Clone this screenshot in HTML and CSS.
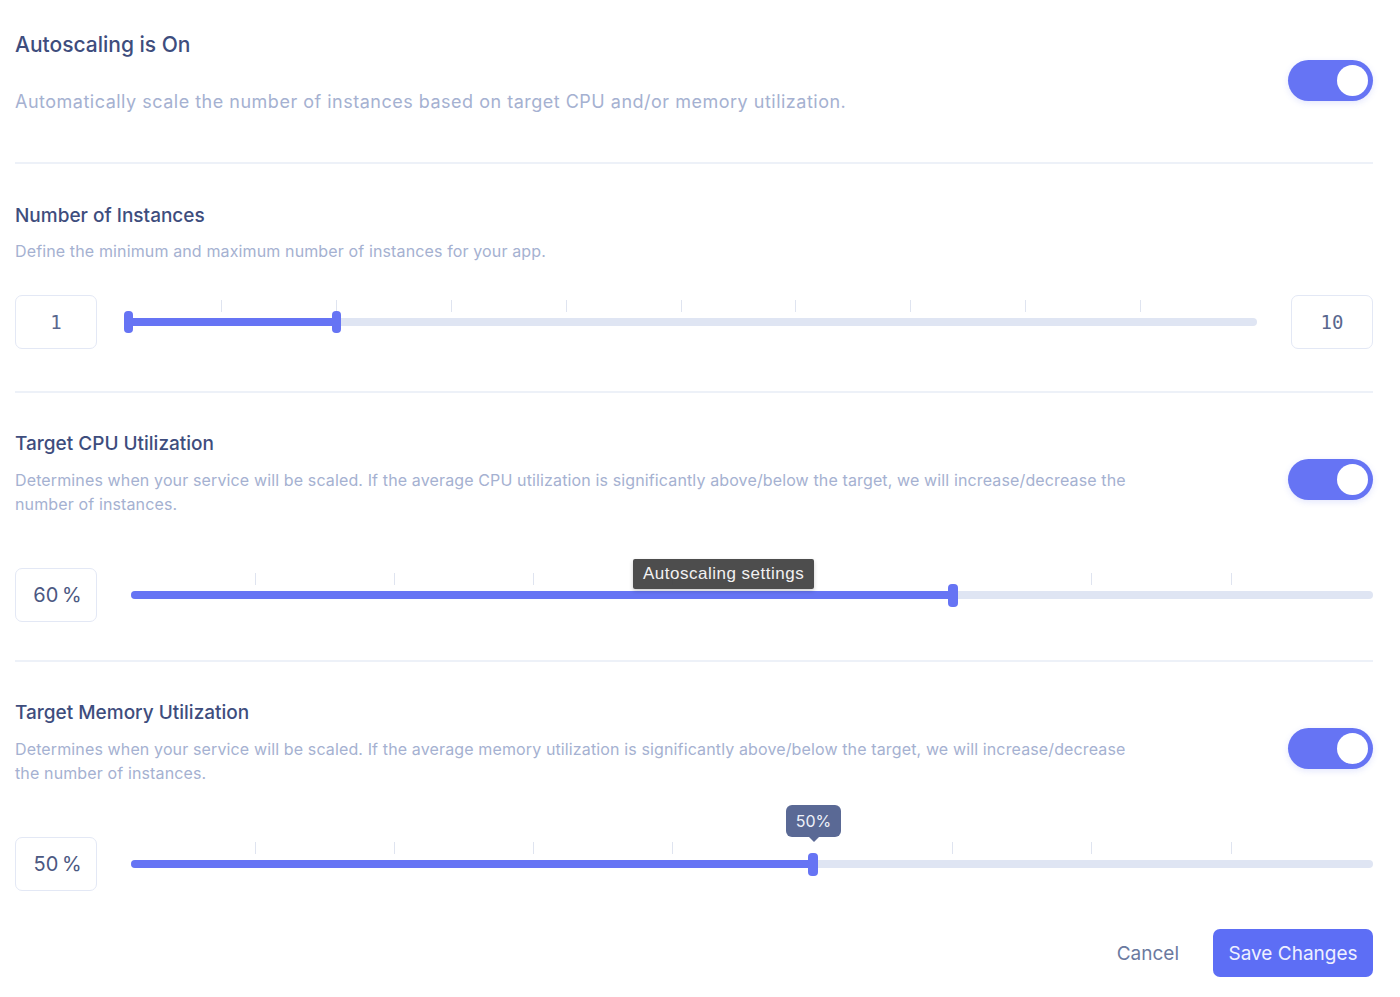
FILE: index.html
```html
<!DOCTYPE html>
<html>
<head>
<meta charset="utf-8">
<link rel="stylesheet" href="styles.css">
</head>
<body>
<div class="page">
  <section class="sec sec-first">
    <div class="head">
      <div class="text">
        <h2 class="title title-lg">Autoscaling is On</h2>
        <p class="desc desc-lg">Automatically scale the number of instances based on target CPU and/or memory utilization.</p>
      </div>
      <div class="toggle"><span class="knob"></span></div>
    </div>
  </section>

  <section class="sec sec-inst">
    <div class="head">
      <div class="text">
        <h2 class="title">Number of Instances</h2>
        <p class="desc desc-inst">Define the minimum and maximum number of instances for your app.</p>
      </div>
    </div>
    <div class="slider-row">
      <div class="box mono">1</div>
      <div class="slider slider-inst">
        <div class="track"></div>
        <div class="fill" style="left:0px;width:208px"></div>
        <span class="tick" style="left:93px"></span>
        <span class="tick" style="left:208px"></span>
        <span class="tick" style="left:323px"></span>
        <span class="tick" style="left:438px"></span>
        <span class="tick" style="left:553px"></span>
        <span class="tick" style="left:667px"></span>
        <span class="tick" style="left:782px"></span>
        <span class="tick" style="left:897px"></span>
        <span class="tick" style="left:1012px"></span>
        <span class="thumb" style="left:0px"></span>
        <span class="thumb" style="left:208px"></span>
      </div>
      <div class="box mono">10</div>
    </div>
  </section>

  <section class="sec sec-cpu">
    <div class="head">
      <div class="text">
        <h2 class="title">Target CPU Utilization</h2>
        <p class="desc desc-wrap">Determines when your service will be scaled. If the average CPU utilization is significantly above/below the target, we will increase/decrease the number of instances.</p>
      </div>
      <div class="toggle"><span class="knob"></span></div>
    </div>
    <div class="slider-row slider-row-pct">
      <div class="box">60&#8201;%</div>
      <div class="slider slider-pct">
        <div class="track"></div>
        <div class="fill" style="left:0px;width:822px"></div>
        <span class="tick" style="left:124px"></span>
        <span class="tick" style="left:263px"></span>
        <span class="tick" style="left:402px"></span>
        <span class="tick" style="left:541px"></span>
        <span class="tick" style="left:960px"></span>
        <span class="tick" style="left:1100px"></span>
        <span class="thumb thumb-wide" style="left:822px"></span>
        <div class="native-tip">Autoscaling settings</div>
      </div>
    </div>
  </section>

  <section class="sec sec-last">
    <div class="head">
      <div class="text">
        <h2 class="title">Target Memory Utilization</h2>
        <p class="desc desc-wrap">Determines when your service will be scaled. If the average memory utilization is significantly above/below the target, we will increase/decrease the number of instances.</p>
      </div>
      <div class="toggle"><span class="knob"></span></div>
    </div>
    <div class="slider-row slider-row-pct">
      <div class="box">50&#8201;%</div>
      <div class="slider slider-pct">
        <div class="track"></div>
        <div class="fill" style="left:0px;width:682px"></div>
        <span class="tick" style="left:124px"></span>
        <span class="tick" style="left:263px"></span>
        <span class="tick" style="left:402px"></span>
        <span class="tick" style="left:541px"></span>
        <span class="tick" style="left:821px"></span>
        <span class="tick" style="left:960px"></span>
        <span class="tick" style="left:1100px"></span>
        <span class="thumb thumb-wide" style="left:682px"></span>
        <div class="value-tip" style="left:682px">50%</div>
      </div>
    </div>
  </section>

  <div class="actions">
    <button class="btn-cancel">Cancel</button>
    <button class="btn-save">Save Changes</button>
  </div>
</div>
</body>
</html>
```

FILE: styles.css
```css
* { box-sizing: border-box; }
html, body { margin: 0; padding: 0; background: #ffffff; }
body {
  font-family: Inter, "Noto Sans", "Liberation Sans", sans-serif;
  color: #3e4d7d;
}
.page {
  width: 1400px;
  padding: 0 27px 0 15px;
}
.sec {
  border-bottom: 2px solid #edf1f8;
  padding-top: 39px;
  padding-bottom: 39px;
}
.sec-first { padding-top: 33px; padding-bottom: 47px; }
.sec-inst { padding-top: 40px; padding-bottom: 42px; }
.sec-cpu { padding-bottom: 38px; }
.sec-last { border-bottom: none; padding-bottom: 0; }
.head {
  display: flex;
  align-items: flex-start;
  justify-content: space-between;
}
.text { flex: 1; }
.title {
  margin: 0;
  font-size: 19px;
  line-height: 24px;
  font-weight: 500;
  color: #3e4d7d;
}
.title-lg { font-size: 21px; }
.desc {
  margin: 13px 0 0;
  font-size: 16px;
  line-height: 24px;
  color: #a5b1d1;
  letter-spacing: 0.13px;
}
.desc-inst { margin-top: 11px; }
.desc-lg { font-size: 18px; line-height: 26px; margin-top: 32px; letter-spacing: 0.5px; }
.desc-wrap { max-width: 1130px; margin-top: 12px; }
.toggle {
  width: 85px;
  height: 41px;
  border-radius: 21px;
  background: #6674f4;
  margin-top: 27px;
  display: flex;
  align-items: center;
  justify-content: flex-end;
  padding-right: 5px;
  box-shadow: 0 2px 6px rgba(102, 116, 244, 0.18);
  flex-shrink: 0;
}
.knob {
  width: 31px;
  height: 31px;
  border-radius: 50%;
  background: #ffffff;
}
.slider-row {
  display: flex;
  align-items: center;
  margin-top: 32px;
}
.slider-row-pct { margin-top: 52px; }
.box {
  width: 82px;
  height: 54px;
  border: 1.5px solid #e3e8f5;
  border-radius: 7px;
  display: flex;
  align-items: center;
  justify-content: center;
  font-size: 20px;
  color: #4b5882;
  flex-shrink: 0;
  padding-left: 3px;
}
.mono {
  font-family: "DejaVu Sans Mono", "Liberation Mono", monospace;
  font-size: 19px;
  color: #5a678e;
  padding-left: 0;
}
.slider {
  position: relative;
  height: 54px;
  flex: 1;
}
.slider-inst { margin: 0 34px 0 31px; }
.slider-pct { margin-left: 34px; }
.track {
  position: absolute;
  left: 0; right: 0;
  top: 23px;
  height: 8px;
  border-radius: 4px;
  background: #dfe5f3;
}
.fill {
  position: absolute;
  top: 23px;
  height: 8px;
  border-radius: 4px;
  background: #6674f4;
}
.tick {
  position: absolute;
  top: 5px;
  width: 1px;
  height: 12px;
  background: #dfe4f0;
}
.thumb {
  position: absolute;
  top: 16px;
  width: 9px;
  height: 22px;
  margin-left: -4px;
  border-radius: 4px;
  background: #6674f4;
}
.thumb-wide { width: 10px; margin-left: -5px; height: 23px; }
.native-tip {
  position: absolute;
  left: 502px;
  top: -9px;
  height: 30px;
  padding: 0 10px;
  background: rgba(62, 62, 62, 0.92);
  color: #f2f2f2;
  font-family: "Liberation Sans", Arial, sans-serif;
  font-size: 17px;
  letter-spacing: 0.5px;
  line-height: 30px;
  white-space: nowrap;
  border-radius: 2px;
  box-shadow: 0 2px 4px rgba(0, 0, 0, 0.2);
}
.value-tip {
  position: absolute;
  top: -32px;
  width: 55px;
  height: 32px;
  margin-left: -27px;
  background: #5a6995;
  color: #eef1fa;
  font-size: 16px;
  line-height: 32px;
  text-align: center;
  border-radius: 6px;
}
.value-tip::after {
  content: "";
  position: absolute;
  left: 50%;
  bottom: -5px;
  margin-left: -5px;
  border-left: 5px solid transparent;
  border-right: 5px solid transparent;
  border-top: 5px solid #5a6995;
}
.actions {
  display: flex;
  justify-content: flex-end;
  align-items: center;
  margin-top: 38px;
  gap: 34px;
}
.btn-cancel {
  border: none;
  background: none;
  font-family: inherit;
  font-size: 19px;
  color: #6b7a9f;
  padding: 0;
}
.btn-save {
  width: 160px;
  height: 48px;
  border: none;
  border-radius: 7px;
  background: #5d6ef5;
  color: #eef0ff;
  font-family: inherit;
  font-size: 19px;
  padding: 0;
}
```
